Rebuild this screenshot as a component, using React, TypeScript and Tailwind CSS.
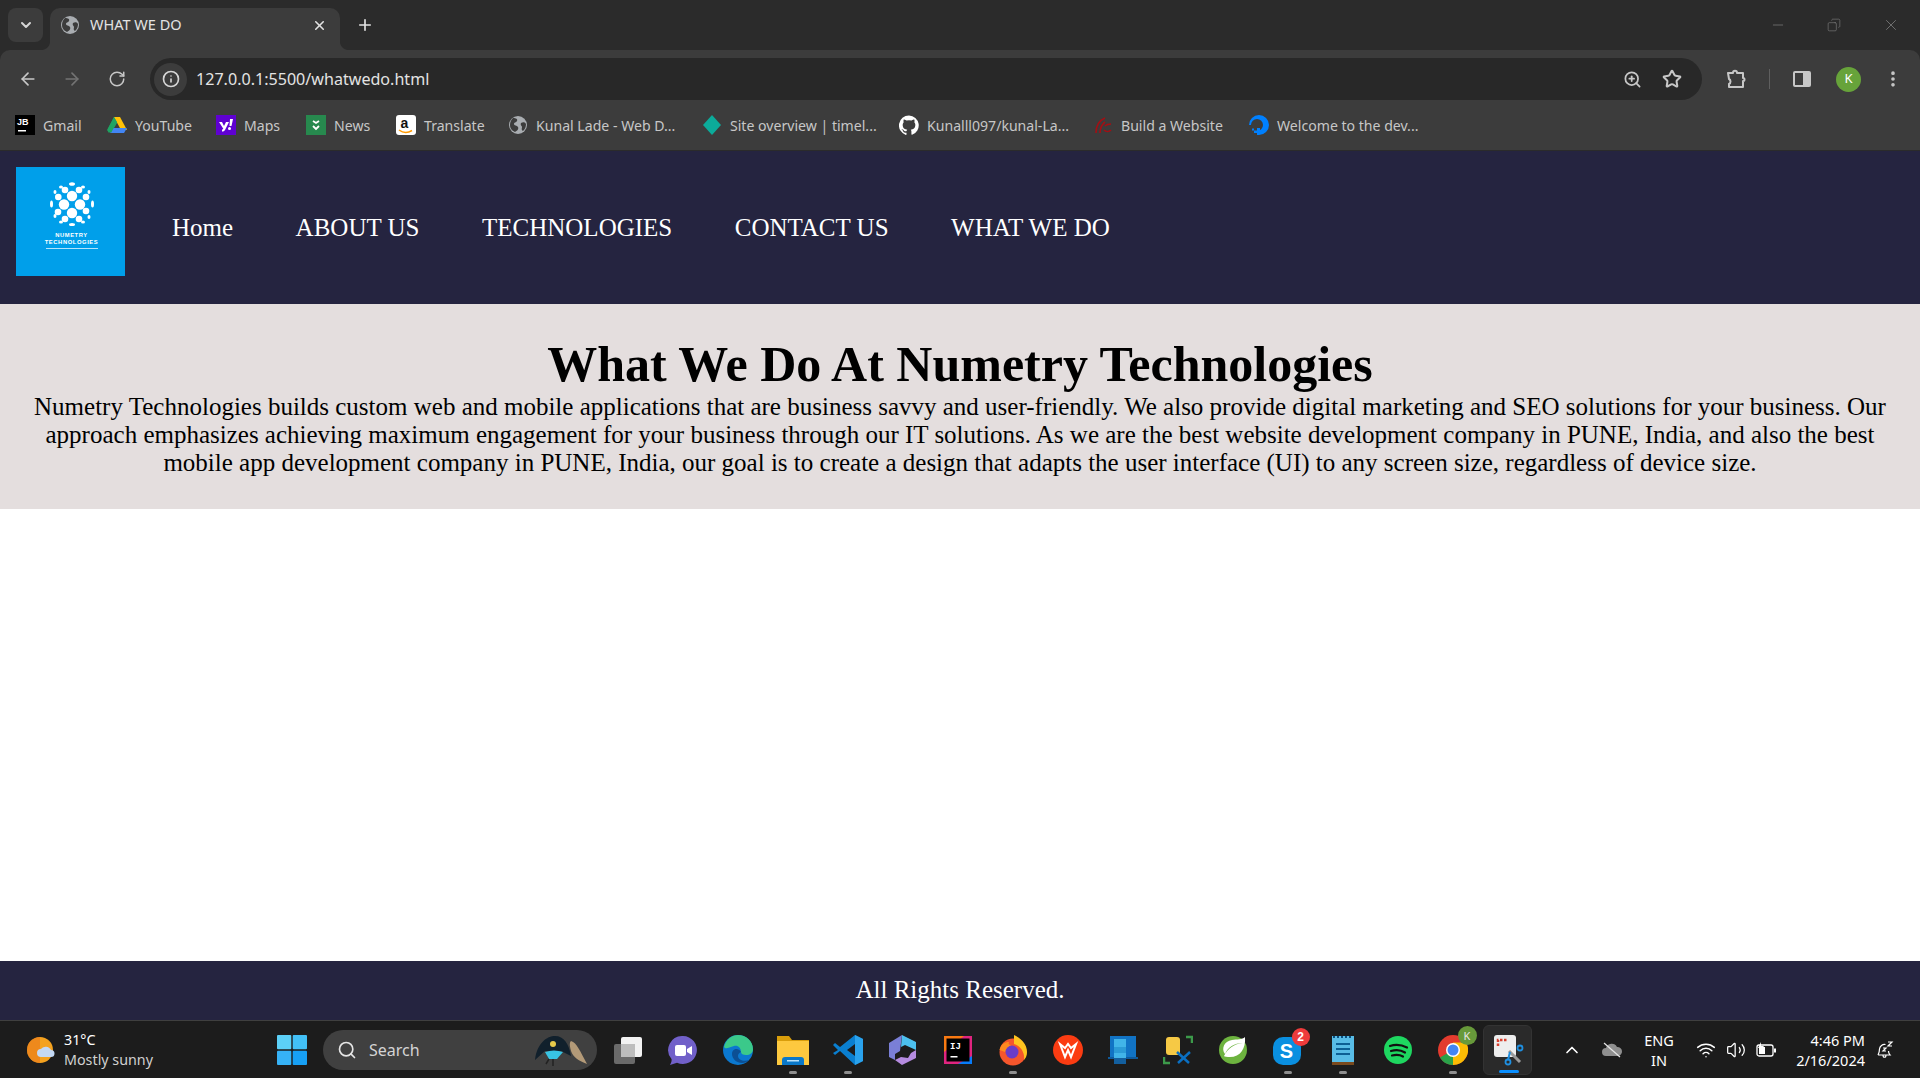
import React from 'react';
import { ArrowLeft, ArrowRight, ChevronDown, ChevronUp, Copy, Info, Minus, MoreVertical, Plus, RotateCw, Search, Star, Volume2, Wifi, X, ZoomIn } from 'lucide-react';

const UI_FONT = "font-['Noto_Sans',sans-serif]";

const Globe = () => (
  <svg width="20" height="20" viewBox="0 0 20 20">
    <circle cx="10" cy="10" r="9" fill="#a9adb1" />
    <path d="M5 3c3 0 5 1 4 3S6 7 6 9s3 1 4 3-1 4-3 5c-2-1-5-3-5-7 0-3 1-5 3-7zM13 8c2-1 4-1 5 1 0 3-1 5-3 7-2-1-1-3-1-4s-2-2-1-4z" fill="#3c3c3c" />
  </svg>
);

const bookmarks: { label: string; width: string; icon: React.ReactNode }[] = [
  {
    label: 'Gmail',
    width: 'w-[92px]',
    icon: (
      <svg width="20" height="20" viewBox="0 0 20 20">
        <rect width="20" height="20" fill="#000" />
        <text x="2" y="10" fill="#fff" fontSize="9" fontWeight="700" fontFamily="Liberation Sans">JB</text>
        <rect x="3" y="15" width="8" height="1.5" fill="#fff" />
      </svg>
    ),
  },
  {
    label: 'YouTube',
    width: 'w-[109px]',
    icon: (
      <svg width="20" height="20" viewBox="0 0 20 20">
        <path d="M7 2h6l-3 6-3 5-5 5-2-3z" fill="#1fa463" />
        <path d="M7 2h6l7 13h-6z" fill="#ffc107" />
        <path d="M6 13h14l-3 5H3z" fill="#4285f4" />
        <path d="M7 2l3 5-6 11-3-4z" fill="#1fa463" />
      </svg>
    ),
  },
  {
    label: 'Maps',
    width: 'w-[90px]',
    icon: (
      <svg width="20" height="20" viewBox="0 0 20 20">
        <rect width="20" height="20" fill="#5f01d1" />
        <path d="M3 7h3l2 4 2-4h3l-4 8c-.4.8-1.2 1.5-3 1.5v-2c.8 0 1-.3 1.3-.8z" fill="#fff" />
        <path d="M14 4h3l-1.500 7h-2z" fill="#fff" />
        <circle cx="13.500" cy="13.500" r="1.500" fill="#fff" />
      </svg>
    ),
  },
  {
    label: 'News',
    width: 'w-[90px]',
    icon: (
      <svg width="20" height="20" viewBox="0 0 20 20">
        <rect width="20" height="20" fill="#27894e" />
        <path d="M7 6l3 2 3-2M7 11l3 3 3-3" fill="none" stroke="#fff" strokeWidth="1.800" />
      </svg>
    ),
  },
  {
    label: 'Translate',
    width: 'w-[112px]',
    icon: (
      <svg width="20" height="20" viewBox="0 0 20 20">
        <rect width="20" height="20" rx="3" fill="#fff" />
        <text x="4.500" y="13" fill="#111" fontSize="14" fontWeight="700" fontFamily="Liberation Sans">a</text>
        <path d="M3 15c4 3 9 3 13 .5" fill="none" stroke="#f90" strokeWidth="1.500" />
      </svg>
    ),
  },
  { label: 'Kunal Lade - Web D...', width: 'w-[194px]', icon: <Globe /> },
  {
    label: 'Site overview | timel...',
    width: 'w-[197px]',
    icon: (
      <svg width="20" height="20" viewBox="0 0 20 20">
        <path d="M10 0l9 10-9 10-9-10z" fill="#0cab9a" />
      </svg>
    ),
  },
  {
    label: 'Kunalll097/kunal-La...',
    width: 'w-[194px]',
    icon: (
      <svg width="20" height="20" viewBox="0 0 24 24">
        <path fill="#fff" d="M12 .5a12 12 0 0 0-3.800 23.400c.6.1.8-.3.8-.6v-2.100c-3.300.7-4-1.600-4-1.600-.6-1.400-1.400-1.800-1.400-1.800-1.100-.7.100-.7.100-.7 1.200.1 1.900 1.200 1.900 1.200 1.100 1.800 2.800 1.300 3.500 1 .1-.8.400-1.300.8-1.600-2.700-.3-5.500-1.300-5.500-5.900 0-1.300.5-2.400 1.200-3.200-.1-.3-.5-1.500.1-3.200 0 0 1-.3 3.300 1.200a11.500 11.500 0 0 1 6 0c2.300-1.500 3.300-1.200 3.300-1.200.7 1.700.2 2.900.1 3.200.8.800 1.200 1.900 1.200 3.200 0 4.600-2.800 5.600-5.500 5.900.4.400.8 1.100.8 2.200v3.300c0 .3.200.7.800.6A12 12 0 0 0 12 .500z" />
      </svg>
    ),
  },
  {
    label: 'Build a Website',
    width: 'w-[156px]',
    icon: (
      <svg width="20" height="20" viewBox="0 0 20 20" fill="none" stroke="#a30f14" strokeWidth="1.600">
        <path d="M3 18c0-6 2-12 9-15M7 18c0-4 1-8 5-11M12 11c2-2 4-2 6-2M11 15c2 2 5 2 7 0" />
      </svg>
    ),
  },
  {
    label: 'Welcome to the dev...',
    width: 'w-[172px]',
    icon: (
      <svg width="20" height="20" viewBox="0 0 20 20">
        <path d="M8 20v-4a6 6 0 1 0-6-6H0a10 10 0 1 1 10 10z" fill="#0080ff" />
        <path d="M8 13h3v3H8zM5 15.500h3V18H5zM3 13.500h2V15.500H3z" fill="#0080ff" />
      </svg>
    ),
  },
];

const TabStrip = () => (
  <div className="h-[50px] bg-[#2b2b2b] flex items-start relative">
    <div className="mt-2 ml-2 w-[35px] h-[34px] rounded-lg bg-[#3c3c3c] flex items-center justify-center">
      <ChevronDown size={16} strokeWidth={3} color="#d6d6d6" />
    </div>
    <div className="relative mt-2 ml-[7px] w-[290px] h-[42px] bg-[#3c3c3c] rounded-t-[10px] flex items-center pl-[10px] pr-[14px] pb-2">
      <svg className="absolute left-[-8px] bottom-0" width="8" height="8" viewBox="0 0 8 8"><path d="M8 0v8H0c4 0 8-4 8-8z" fill="#3c3c3c" /></svg>
      <svg className="absolute right-[-8px] bottom-0" width="8" height="8" viewBox="0 0 8 8"><path d="M0 0v8H8C4 8 0 4 0 0z" fill="#3c3c3c" /></svg>
      <Globe />
      <span className={`ml-[10px] text-[14.5px] text-[#e3e3e3] ${UI_FONT}`}>WHAT WE DO</span>
      <X size={15} strokeWidth={2.5} color="#e3e3e3" className="ml-auto mr-[-1px]" />
    </div>
    <Plus size={18} strokeWidth={2.2} color="#e3e3e3" className="mt-[16px] ml-4" />
    <div className="ml-auto flex items-center h-[50px] text-[#858585]">
      <Minus size={16} strokeWidth={1} />
      <Copy size={14} strokeWidth={1} className="ml-[41px] scale-x-[-1]" />
      <X size={18} strokeWidth={1} className="ml-[41px] mr-[20px]" />
    </div>
  </div>
);

const Toolbar = () => (
  <div className="h-[50px] bg-[#3c3c3c] flex items-center pt-2 rounded-t-[10px]">
    <ArrowLeft size={20} strokeWidth={2} color="#c7c7c7" className="ml-[18px]" />
    <ArrowRight size={20} strokeWidth={2} color="#737373" className="ml-[24px]" />
    <RotateCw size={18} strokeWidth={2} color="#c7c7c7" className="ml-[26px]" />
    <div className="ml-[24px] w-[1552px] h-[42px] bg-[#282828] rounded-full flex items-center pl-[4px] pr-[20px]">
      <div className="w-[33px] h-[33px] rounded-full bg-[#3c3c3c] flex items-center justify-center">
        <Info size={18} strokeWidth={2.2} color="#d6d6d6" />
      </div>
      <span className={`ml-[9px] text-[16.1px] text-[#e3e3e3] ${UI_FONT}`}>127.0.0.1:5500/whatwedo.html</span>
      <ZoomIn size={19} strokeWidth={2.2} color="#c7c7c7" className="ml-auto" />
      <Star size={20} strokeWidth={2.4} color="#c7c7c7" className="ml-[20px]" />
    </div>
    <svg className="ml-[23px]" width="22" height="22" viewBox="0 0 22 22" fill="none" stroke="#c7c7c7" strokeWidth="2" strokeLinejoin="round">
      <path d="M3 5h5c0-3 4-3 4 0h6v5c2 0 2 3 0 3v6H4v-3c2-1 2-4 0-5z" />
    </svg>
    <div className="ml-[22px] w-[1px] h-[20px] bg-[#5f5f5f]" />
    <svg className="ml-[22px]" width="20" height="20" viewBox="0 0 20 20">
      <rect x="1" y="2" width="18" height="16" rx="2" fill="#c7c7c7" />
      <rect x="3" y="4" width="8" height="12" fill="#3c3c3c" />
    </svg>
    <div className="ml-[24px] w-[25px] h-[25px] rounded-full bg-[#67a33a] flex items-center justify-center">
      <span className={`text-[13px] text-white ${UI_FONT}`}>K</span>
    </div>
    <MoreVertical size={20} strokeWidth={2.4} color="#c7c7c7" className="ml-[22px]" />
  </div>
);

const BookmarksBar = () => (
  <div className="h-[51px] bg-[#3c3c3c] flex items-center pl-[15px] pt-[1px] border-b border-[#2b2b2b]">
    {bookmarks.map((b) => (
      <div key={b.label} className={`flex items-center gap-2 shrink-0 ${b.width}`}>
        <span className="shrink-0 w-5 h-5 flex">{b.icon}</span>
        <span className={`text-[14.1px] text-[#c7c7c7] whitespace-nowrap ${UI_FONT}`}>{b.label}</span>
      </div>
    ))}
  </div>
);

const Logo = () => {
  const inner = [[22, 14], [14, 22.5], [30, 22.5], [22, 31]];
  const ring = [[15, 8], [29, 8], [8.300, 15], [36, 15], [8, 30], [36, 29], [15, 37], [29, 37]];
  const outer: number[][] = [[22, 2, 3, 1.800], [11, 5, 2, 1.500], [33, 5, 2, 1.500], [5, 10, 1.500, 2], [39, 10, 1.500, 2], [1.500, 22, 1.500, 3.500], [42.500, 22, 1.500, 3.500], [5, 34, 1.500, 2], [39, 35, 1.500, 2], [11, 40, 2, 1.500], [33, 40, 2, 1.500], [22, 42.500, 3, 1.500]];
  return (
    <div className="w-[109px] h-[109px] bg-[#009fea] flex flex-col items-center pt-[15px] pl-[2px] shrink-0">
      <svg width="44" height="44" viewBox="0 0 44 44" fill="#fff">
        {inner.map(([x, y]) => <circle key={`${x}-${y}`} cx={x} cy={y} r="5.200" />)}
        {ring.map(([x, y]) => <circle key={`${x}-${y}`} cx={x} cy={y} r="3.300" />)}
        {outer.map(([x, y, rx, ry]) => <ellipse key={`${x}-${y}`} cx={x} cy={y} rx={rx} ry={ry} />)}
      </svg>
      <p className="mt-[6px] text-[5.8px] leading-[6.500px] font-bold tracking-[0.6px] text-white text-center font-['Liberation_Sans',sans-serif]">NUMETRY<br />TECHNOLOGIES</p>
      <div className="mt-[3px] w-[52px] h-[1px] bg-[#b5e4fb]" />
    </div>
  );
};

const NavBar = () => (
  <nav className="h-[153px] bg-[#252440] flex items-start pl-[16px] pt-[16px] font-['Liberation_Serif',serif]">
    <Logo />
    <ul className="flex gap-[62.500px] ml-[47px] mt-[46px] text-[25px] leading-[30px] text-white whitespace-nowrap">
      <li>Home</li>
      <li>ABOUT US</li>
      <li>TECHNOLOGIES</li>
      <li>CONTACT US</li>
      <li>WHAT WE DO</li>
    </ul>
  </nav>
);

const Hero = () => (
  <section className="h-[205px] bg-[#e4dede] text-black text-center px-[16px] pt-[31px] font-['Liberation_Serif',serif]">
    <h1 className="text-[50px] leading-[58px] font-bold">What We Do At Numetry Technologies</h1>
    <p className="text-[25px] leading-[28px]">
      Numetry Technologies builds custom web and mobile applications that are business savvy and user-friendly. We also provide digital marketing and SEO solutions for your business. Our approach emphasizes achieving maximum engagement for your business through our IT solutions. As we are the best website development company in PUNE, India, and also the best mobile app development company in PUNE, India, our goal is to create a design that adapts the user interface (UI) to any screen size, regardless of device size.
    </p>
  </section>
);

const taskIcons: { id: string; running?: boolean; icon: React.ReactNode }[] = [
  {
    id: 'taskview',
    icon: (
      <svg width="32" height="32" viewBox="0 0 32 32">
        <rect x="2" y="10" width="21" height="20" rx="2" fill="#6a6a6a" />
        <rect x="9" y="3" width="21" height="20" rx="2" fill="#f2f2f2" />
        <rect x="9" y="10" width="14" height="13" fill="#bdbdbd" />
      </svg>
    ),
  },
  {
    id: 'meet',
    icon: (
      <svg width="32" height="32" viewBox="0 0 32 32">
        <path d="M16 2a14 14 0 1 1-6 26.700L3 31c1-2 2-4 1.500-6A14 14 0 0 1 16 2z" fill="#7160c9" />
        <rect x="8" y="11" width="11" height="11" rx="2" fill="#fff" />
        <path d="M20 15l5-3v9l-5-3z" fill="#fff" />
      </svg>
    ),
  },
  {
    id: 'edge',
    icon: (
      <svg width="32" height="32" viewBox="0 0 32 32">
        <circle cx="16" cy="16" r="15" fill="#0b78cf" />
        <path d="M2 13C4 5 10 1 16 1c8 0 15 6 15 14 0 4-3 6-7 6-3 0-5-1-5-3 0-4-3-7-7-6-5 1-8 4-10 1z" fill="#3bc98a" />
        <path d="M19 18c-3-5-9-3-9 2s5 9 10 9c3 0 5-1 7-3-5 2-11 0-11-4 0-2 1-3 3-4z" fill="#0c4f94" />
      </svg>
    ),
  },
  {
    id: 'files',
    running: true,
    icon: (
      <svg width="34" height="32" viewBox="0 0 34 32">
        <path d="M1 2h12l3 4h17v4H1z" fill="#d99e0b" />
        <rect x="1" y="7" width="32" height="24" fill="#fdc93f" />
        <path d="M6 31v-5a3 3 0 0 1 3-3h16a3 3 0 0 1 3 3v5z" fill="#0a78c9" />
        <rect x="11" y="26" width="12" height="1.500" fill="#b8e2fb" />
      </svg>
    ),
  },
  {
    id: 'vscode',
    running: true,
    icon: (
      <svg width="32" height="32" viewBox="0 0 32 32">
        <path d="M23 1l8 4v22l-8 4L8 17l-5 4-2-2 5-3-5-5 2-2 5 4z" fill="#0a7fd0" />
        <path d="M23 1l8 4v22l-8 4z" fill="#2aa2ec" />
        <path d="M23 10l-8 6 8 6z" fill="#1c1c1c" />
      </svg>
    ),
  },
  {
    id: 'copilot',
    icon: (
      <svg width="30" height="32" viewBox="0 0 30 32">
        <path d="M14 1l14 7v8l-11-5-4 2z" fill="#4cc0ee" />
        <path d="M1 9l13-8-2 16-5 3v6L1 23z" fill="#7a7fd6" />
        <path d="M28 16v8l-14 7-7-5 6-3 7 1 3-5z" fill="#b58be0" />
      </svg>
    ),
  },
  {
    id: 'idea',
    icon: (
      <svg width="28" height="28" viewBox="0 0 28 28">
        <rect width="28" height="28" fill="#e0247f" />
        <path d="M0 0h20L0 16z" fill="#f97a12" />
        <path d="M28 0v20L14 28h14z" fill="#087cfa" />
        <rect x="2.500" y="2.500" width="23" height="23" fill="#000" />
        <text x="6" y="13" fontSize="9" fontWeight="700" fill="#fff" fontFamily="Liberation Mono">IJ</text>
        <rect x="6.500" y="20" width="7" height="1.500" fill="#fff" />
      </svg>
    ),
  },
  {
    id: 'firefox',
    running: true,
    icon: (
      <svg width="30" height="32" viewBox="0 0 30 32">
        <circle cx="15" cy="18" r="13.500" fill="#f5562c" />
        <path d="M16 1c8 4 13 10 13 17 0 3-1 6-3 8 1-7-3-14-10-16z" fill="#ffc31f" />
        <path d="M1.500 16C3 10 7 8 11 8c-1 2 0 3 2 3l-6 7z" fill="#ff8a1f" />
        <circle cx="14" cy="18" r="6.500" fill="#6a3cc7" />
      </svg>
    ),
  },
  {
    id: 'wps',
    icon: (
      <svg width="30" height="30" viewBox="0 0 30 30">
        <circle cx="15" cy="15" r="15" fill="#fb3c12" />
        <path d="M7 9l5 13 3-7 3 7 5-13-5 4-3-4-3 4z" fill="none" stroke="#fff" strokeWidth="2" />
      </svg>
    ),
  },
  {
    id: 'phone',
    icon: (
      <svg width="30" height="28" viewBox="0 0 30 28">
        <rect x="2" y="0" width="26" height="22" fill="#1173c4" />
        <rect x="0" y="21" width="30" height="2" fill="#0e5a9c" />
        <rect x="6" y="3" width="12" height="25" fill="#41b4e8" />
        <rect x="6" y="11" width="12" height="6" fill="#2b9bd6" />
        <rect x="6" y="22" width="12" height="6" fill="#135f9e" />
      </svg>
    ),
  },
  {
    id: 'dbtool',
    icon: (
      <svg width="30" height="30" viewBox="0 0 30 30" fill="none">
        <path d="M1 22v6h6M23 2h6v6" stroke="#3c9a4a" strokeWidth="2.500" />
        <rect x="3" y="2" width="14" height="18" rx="3" fill="#f6c945" />
        <path d="M14 17l12 11M27 17L15 28" stroke="#0a6fc2" strokeWidth="2.500" />
      </svg>
    ),
  },
  {
    id: 'spring',
    icon: (
      <svg width="30" height="30" viewBox="0 0 30 30">
        <circle cx="15" cy="15" r="14" fill="#6db33f" />
        <path d="M27 2c1 12-5 21-17 20-3 0-4-1-4-1 4-8 10-12 19-13-9 0-15 4-18 11C3 14 6 6 14 5c5-1 10 0 13-3z" fill="#fff" />
      </svg>
    ),
  },
  {
    id: 'skype',
    running: true,
    icon: (
      <div className="relative w-[30px] h-[30px]">
        <div className="w-[28px] h-[28px] rounded-[10px] bg-[#0a8fe0] flex items-center justify-center mt-[2px]">
          <span className="text-white text-[20px] font-bold leading-none font-['Liberation_Sans',sans-serif]">S</span>
        </div>
        <div className="absolute top-[-7px] right-[-7px] w-[18px] h-[18px] rounded-full bg-[#ee3b3b] flex items-center justify-center">
          <span className="text-white text-[12px] font-bold leading-none font-['Liberation_Sans',sans-serif]">2</span>
        </div>
      </div>
    ),
  },
  {
    id: 'notepad',
    running: true,
    icon: (
      <svg width="24" height="30" viewBox="0 0 24 30">
        <rect x="1" y="1" width="22" height="27" fill="#58bce6" />
        <rect x="1" y="27" width="22" height="3" fill="#7a4a1e" />
        <path d="M3 1v2M7 1v2M11 1v2M15 1v2M19 1v2" stroke="#0a4f80" strokeWidth="2" />
        <path d="M5 9h14M5 14h14M5 19h14" stroke="#0d5f94" strokeWidth="2" />
      </svg>
    ),
  },
  {
    id: 'spotify',
    icon: (
      <svg width="28" height="28" viewBox="0 0 28 28" fill="none">
        <circle cx="14" cy="14" r="14" fill="#1ed760" />
        <path d="M6 10c6-2 12-1 17 1.500M7 15c5-1.500 10-1 14 1.500M8 19.500c4-1 8-.7 11 1" stroke="#111" strokeWidth="2.200" strokeLinecap="round" />
      </svg>
    ),
  },
  {
    id: 'chrome',
    running: true,
    icon: (
      <div className="relative w-[30px] h-[30px]">
        <svg width="30" height="30" viewBox="0 0 30 30">
          <circle cx="15" cy="15" r="15" fill="#e33b2e" />
          <path d="M15 15L2 22.500A15 15 0 0 0 15 30z" fill="#2aa24a" />
          <path d="M15 15v15A15 15 0 0 0 28 7.500H15z" fill="#fbbc04" />
          <circle cx="15" cy="15" r="7" fill="#fff" />
          <circle cx="15" cy="15" r="5.500" fill="#4285f4" />
        </svg>
        <div className="absolute top-[-9px] right-[-9px] w-[19px] h-[19px] rounded-full bg-[#67993a] flex items-center justify-center">
          <span className={`text-[#e7e7e7] text-[11px] leading-none ${UI_FONT}`}>K</span>
        </div>
      </div>
    ),
  },
];

const Taskbar = () => (
  <div className="h-[58px] bg-[#1c1c1c] border-t border-[#3f3f3f] flex items-center pl-[27px]">
    <svg width="28" height="30" viewBox="0 0 28 30" className="shrink-0">
      <circle cx="13" cy="15" r="13" fill="#f4a21f" />
      <path d="M13 2a13 13 0 0 0 0 26z" fill="#e9781a" opacity="0.600" />
      <path d="M14 22a4 4 0 0 1 0-8 6 6 0 0 1 10 1 3.500 3.500 0 0 1 0 7z" fill="#c4d9f4" />
    </svg>
    <div className={`ml-[9px] w-[213px] text-[14.3px] leading-[20px] ${UI_FONT}`}>
      <p className="text-white">31°C</p>
      <p className="text-[#d0d0d0]">Mostly sunny</p>
    </div>
    <svg width="30" height="30" viewBox="0 0 30 30" className="shrink-0">
      <rect width="14.300" height="14.300" rx="1" fill="#5cd0f7" />
      <rect x="15.700" width="14.300" height="14.300" rx="1" fill="#42c0f6" />
      <rect y="15.700" width="14.300" height="14.300" rx="1" fill="#36b2f6" />
      <rect x="15.700" y="15.700" width="14.300" height="14.300" rx="1" fill="#17a0f5" />
    </svg>
    <div className="ml-[16px] w-[274px] h-[40px] rounded-full bg-[#404040] flex items-center pl-[14px] shrink-0">
      <Search size={20} strokeWidth={2} color="#e5e5e5" />
      <span className={`ml-[12px] text-[16px] text-[#d4d4d4] ${UI_FONT}`}>Search</span>
      <svg width="56" height="34" viewBox="0 0 56 34" className="ml-auto mr-[8px]">
        <path d="M2 27C4 10 14 3 22 3c9 0 14 8 16 20l-10-5H12z" fill="#11202c" />
        <path d="M12 19c6-2 12-2 18 0l-6 7h-8z" fill="#38c4e4" />
        <circle cx="20" cy="11" r="3" fill="#e7c94a" />
        <path d="M20 26v7M16 26l-3 5" stroke="#222" strokeWidth="1.500" />
        <path d="M38 8c6 2 9 10 16 23-8-3-14-7-16-13-1-4-2-8 0-10z" fill="#b39a78" />
      </svg>
    </div>
    <div className="ml-[3px] flex shrink-0">
      {taskIcons.map((t) => (
        <div key={t.id} className="relative w-[55px] h-[50px] flex items-center justify-center">
          {t.icon}
          {t.running && <span className="absolute bottom-[1px] left-[24px] w-[8px] h-[3px] rounded-full bg-[#8f8f8f]" />}
        </div>
      ))}
      <div className="relative w-[49px] h-[50px] ml-[3px] rounded-md bg-[#2a2a2a] border border-[#333] flex items-center justify-center">
        <svg width="32" height="32" viewBox="0 0 32 32" fill="none">
          <rect x="2" y="1" width="22" height="22" rx="3" fill="#eeeeee" />
          <path d="M6 12V6h10" stroke="#d9402f" strokeWidth="2.500" strokeDasharray="2.500 1.500" />
          <path d="M17 17l11 11M17 17" stroke="#9a9a9a" strokeWidth="3" />
          <path d="M18 18l-2 8" stroke="#1f8fe0" strokeWidth="2" />
          <circle cx="28" cy="14" r="2.500" stroke="#1f8fe0" strokeWidth="1.800" />
          <circle cx="16" cy="28" r="2.500" stroke="#1f8fe0" strokeWidth="1.800" />
        </svg>
        <span className="absolute bottom-[1px] left-[15px] w-[20px] h-[3px] rounded-full bg-[#0a8fff]" />
      </div>
    </div>
    <div className={`ml-auto flex items-center text-white shrink-0 ${UI_FONT}`}>
      <ChevronUp size={20} strokeWidth={2} />
      <svg className="ml-[19px]" width="22" height="16" viewBox="0 0 22 16">
        <path d="M5 14a4 4 0 0 1 0-8 6 6 0 0 1 11-1 4.500 4.500 0 0 1 1 9z" fill="#8f8f8f" />
        <path d="M3 1l16 14" stroke="#e5e5e5" strokeWidth="1.200" />
      </svg>
      <div className="ml-[18px] w-[36px] text-center text-[14.5px] leading-[20px]">ENG<br />IN</div>
      <Wifi size={20} strokeWidth={1.8} className="ml-[19px]" />
      <Volume2 size={20} strokeWidth={1.5} className="ml-[10px]" />
      <svg className="ml-[10px]" width="21" height="16" viewBox="0 0 21 16" fill="none">
        <rect x="1" y="3" width="16" height="11" rx="2" stroke="#fff" strokeWidth="1.300" />
        <rect x="3" y="5" width="6" height="7" fill="#fff" />
        <rect x="18" y="6.500" width="2" height="4" fill="#fff" />
        <path d="M5 0L2 6h3l-1 4 4-6H5z" fill="#fff" />
      </svg>
      <div className="ml-[18px] w-[70px] text-right text-[14.5px] leading-[20px] whitespace-nowrap">
        <p>4:46 PM</p>
        <p>2/16/2024</p>
      </div>
      <svg className="ml-[11px] mr-[26px]" width="18" height="20" viewBox="0 0 18 20" fill="none" stroke="#fff" strokeWidth="1.200">
        <path d="M2 15c1-2 1.500-3 1.500-6a5 5 0 0 1 6-4.500M2 15h12c-1-1-1.500-2-1.500-4M7 15c0 3 3 3 3 0" />
        <path d="M7 8h3l-3 3h3M12 2h4l-4 4h4" />
      </svg>
    </div>
  </div>
);

export default function App() {
  return (
    <div className="w-full h-screen flex flex-col bg-white overflow-hidden">
      <div className="bg-[#2b2b2b]">
        <TabStrip />
        <Toolbar />
        <BookmarksBar />
      </div>
      <NavBar />
      <Hero />
      <main className="flex-1" />
      <footer className="h-[59px] bg-[#252440] text-white text-center text-[25px] leading-[57px] font-['Liberation_Serif',serif]">
        All Rights Reserved.
      </footer>
      <Taskbar />
    </div>
  );
}
